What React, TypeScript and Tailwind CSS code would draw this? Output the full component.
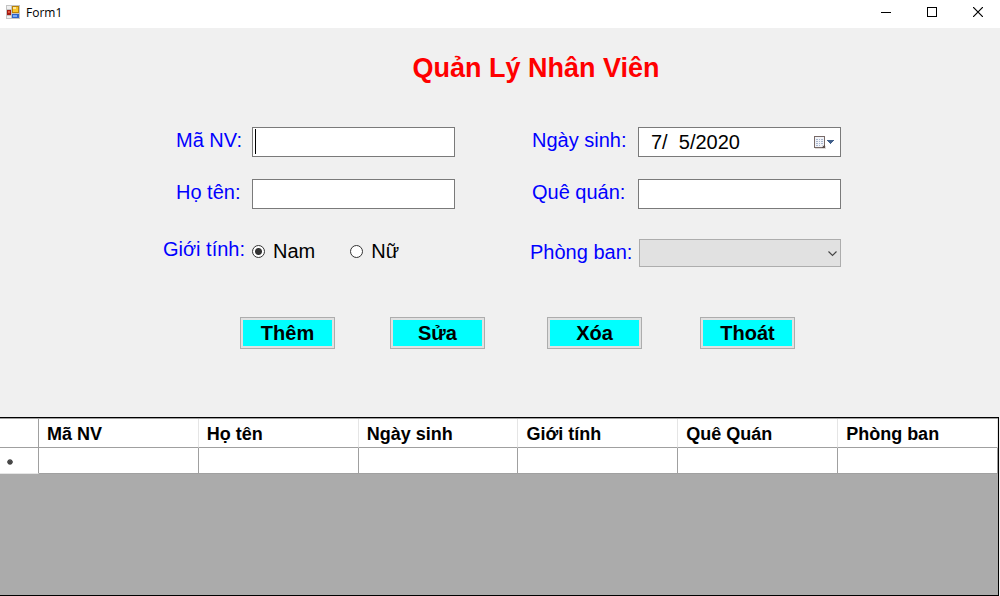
import React, { useState } from "react";

const columns = ["Mã NV", "Họ tên", "Ngày sinh", "Giới tính", "Quê Quán", "Phòng ban"];
const genders = ["Nam", "Nữ"];
const actions = ["Thêm", "Sửa", "Xóa", "Thoát"];

function FormIcon() {
  return (
    <svg width="14" height="14" viewBox="0 0 14 14" shapeRendering="crispEdges" aria-hidden="true" className="mb-1">
      <rect width="14" height="14" fill="#c3c3c3" />
      <rect x="1" y="1" width="4" height="3" fill="#efefef" />
      <rect x="1" y="11" width="4" height="2" fill="#efefef" />
      <rect x="6" y="1" width="7" height="7" fill="#b98207" />
      <rect x="7" y="2" width="5" height="5" fill="#f7c52b" />
      <rect x="7" y="2" width="3" height="2" fill="#ffe79a" />
      <rect x="1" y="5" width="4" height="5" fill="#a51b12" />
      <rect x="2" y="6" width="2" height="2" fill="#e0563c" />
      <rect x="6" y="9" width="7" height="4" fill="#2d63c8" />
      <rect x="7" y="10" width="4" height="2" fill="#78a8f5" />
    </svg>
  );
}

function CalendarIcon() {
  return (
    <svg width="21" height="14" viewBox="0 0 21 14" shapeRendering="crispEdges" aria-hidden="true" className="block">
      <path d="M1 12h9v-2h2v3H1z" fill="#dedad8" />
      <path d="M0 0h11v12H0z" fill="#776966" />
      <path d="M1 1h9v10H1z" fill="#f1f3f8" />
      <path d="M8 9h3v3H8z" fill="#5d504d" />
      <path d="M8 9h2v1H9v1H8z" fill="#d5d3d6" />
      <path d="M2 3h2v1H2zM5 3h1v1H5zM7 3h2v1H7zM2 5h2v1H2zM5 5h1v1H5zM7 5h2v1H7zM2 7h2v1H2zM5 7h1v1H5zM7 7h2v1H7zM2 9h2v1H2zM5 9h1v1H5z" fill="#a9b6cd" />
      <path d="M13 4h7v1h-7zM14 5h5v1h-5zM15 6h3v1h-3zM16 7h1v1h-1z" fill="#41608b" />
    </svg>
  );
}

function TitleBar() {
  const button = "flex h-7 w-[46px] items-center justify-center";
  return (
    <header className="flex h-7 items-center overflow-hidden bg-white pl-1.5">
      <FormIcon />
      <h1 className="mb-0.5 ml-1.5 flex-1 font-['Open_Sans',sans-serif] text-[12px] leading-4">Form1</h1>
      <div className="-mr-px flex">
        <button type="button" aria-label="Minimize" className={button}>
          <svg width="10" height="10" shapeRendering="crispEdges" className="mb-1">
            <path d="M0 5h10v1H0z" />
          </svg>
        </button>
        <button type="button" aria-label="Maximize" className={button}>
          <svg width="10" height="10" shapeRendering="crispEdges" className="mb-1">
            <path d="M.5.5h9v9h-9z" fill="none" stroke="#000" />
          </svg>
        </button>
        <button type="button" aria-label="Close" className={button}>
          <svg width="10" height="10" className="mb-1">
            <path d="M0 0l10 10M10 0L0 10" stroke="#000" strokeWidth="1.2" />
          </svg>
        </button>
      </div>
    </header>
  );
}

export default function App() {
  const [gender, setGender] = useState("Nam");
  const label = "h-[26px] leading-[26px] whitespace-nowrap text-[#0000ff]";
  const field = "h-[30px] w-full border border-[#7a7a7a] bg-white outline-none";

  return (
    <div className="flex min-h-screen flex-col bg-[#f0f0f0] font-['Liberation_Sans',Arial,sans-serif] text-[20px] text-black">
      <TitleBar />

      <form className="flex flex-col items-center pt-6 pb-17 pl-1" onSubmit={(e) => e.preventDefault()}>
        <h2 className="pl-17 text-[27px] leading-8 font-bold text-[#ff0000]">Quản Lý Nhân Viên</h2>

        <div className="mt-[43px] grid w-full max-w-[678px] grid-cols-[292fr_311fr] gap-[75px]">
          <div className="grid grid-cols-[89px_1fr] content-start gap-y-[22px]">
            <label htmlFor="code" className={`${label} pl-[13px]`}>
              Mã NV:
            </label>
            <div className="relative">
              <input id="code" className={`${field} px-1 caret-transparent`} />
              <span className="pointer-events-none absolute top-0.5 left-[3px] h-[25px] w-px bg-black" />
            </div>

            <label htmlFor="name" className={`${label} pl-[13px]`}>
              Họ tên:
            </label>
            <input id="name" className={`${field} px-1`} />

            <span id="gender" className={`${label} mt-[5px]`}>
              Giới tính:
            </span>
            <div role="radiogroup" aria-labelledby="gender" className="mt-[5px] flex h-[30px] items-center gap-[35px]">
              {genders.map((g) => (
                <label key={g} className="flex items-center gap-2">
                  <input
                    type="radio"
                    name="gender"
                    value={g}
                    checked={gender === g}
                    onChange={() => setGender(g)}
                    className="size-[13px] appearance-none rounded-full border border-[#333] bg-white checked:bg-[radial-gradient(circle,#333_3px,#fff_4px)]"
                  />
                  {g}
                </label>
              ))}
            </div>
          </div>

          <div className="grid grid-cols-[108px_1fr] content-start gap-y-[22px]">
            <label htmlFor="birth" className={`${label} pl-0.5`}>
              Ngày sinh:
            </label>
            <div className="relative">
              <input id="birth" defaultValue="7/  5/2020" className={`${field} pr-8 pl-3`} />
              <button type="button" aria-label="Mở lịch" className="absolute top-[9px] right-1.5">
                <CalendarIcon />
              </button>
            </div>

            <label htmlFor="home" className={`${label} pl-0.5`}>
              Quê quán:
            </label>
            <input id="home" className={`${field} px-1`} />

            <label htmlFor="dept" className={`${label} mt-2`}>
              Phòng ban:
            </label>
            <div className="relative mt-2 pl-px">
              <select id="dept" className="block h-7 w-full appearance-none border border-[#adadad] bg-[#e1e1e1] px-1">
                <option></option>
              </select>
              <svg width="9" height="6" viewBox="0 0 9 6" className="pointer-events-none absolute top-3 right-1" aria-hidden="true">
                <path d="M.5.5l4 4 4-4" fill="none" stroke="#444" strokeWidth="1.1" />
              </svg>
            </div>
          </div>
        </div>

        <div className="mt-[50px] grid w-full max-w-[678px] grid-cols-[150px_157px_153px_95px] pl-[77px]">
          {actions.map((a) => (
            <button
              key={a}
              type="button"
              className="h-8 w-[95px] border border-[#adadad] bg-[#e1e1e1] p-0.5 font-bold"
            >
              <span className="block h-full bg-[#00ffff] leading-[26px]">{a}</span>
            </button>
          ))}
        </div>
      </form>

      <div className="mr-px flex-1 border-y border-r border-black bg-[#ababab]">
        <table className="w-full table-fixed border-separate border-spacing-0 border-t border-[#a0a0a0] text-[18px]">
          <thead>
            <tr className="h-[29px] bg-white">
              <th aria-label="Dòng" className="w-[39px] border-r border-b border-[#a0a0a0] p-0" />
              {columns.map((c) => (
                <th
                  key={c}
                  scope="col"
                  className="border-r border-b border-r-[#e5e5e5] border-b-[#a0a0a0] p-0 pt-0.5 pl-2 text-left leading-[26px] font-bold"
                >
                  {c}
                </th>
              ))}
            </tr>
          </thead>
          <tbody>
            <tr className="h-[26px] bg-white">
              <th scope="row" aria-label="Dòng mới" className="border-r border-b border-r-[#a0a0a0] border-b-[#e5e5e5] p-0 pl-[7px]">
                <svg width="6" height="6" viewBox="0 0 6 6" className="mt-0.5 block" aria-hidden="true">
                  <path d="M3 0v6M0 3h6M1 1l4 4M5 1L1 5" stroke="#444" strokeWidth="1.3" />
                </svg>
              </th>
              {columns.map((c) => (
                <td key={c} className="border-r border-b border-[#a0a0a0] p-0" />
              ))}
            </tr>
          </tbody>
        </table>
      </div>
    </div>
  );
}
